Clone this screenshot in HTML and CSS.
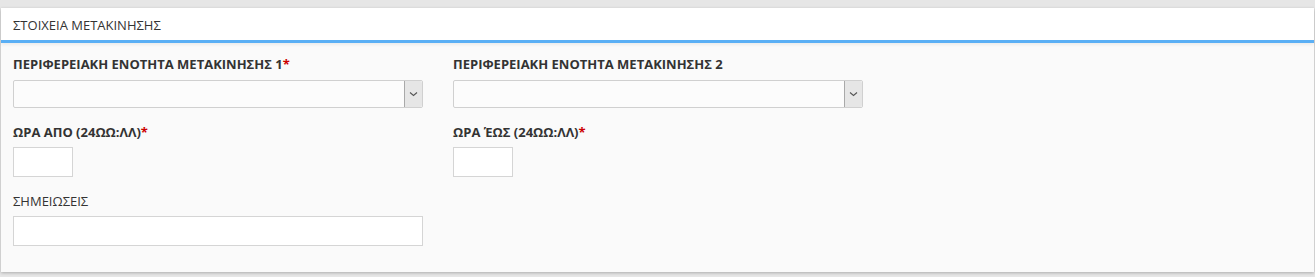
FILE: index.html
```html
<!DOCTYPE html>
<html lang="el">
<head>
    <meta charset="UTF-8">
    <title>Στοιχεία Μετακίνησης</title>
    <link rel="stylesheet" href="styles.css">
</head>
<body>

<div class="panel">
    <div class="panel-heading">ΣΤΟΙΧΕΙΑ ΜΕΤΑΚΙΝΗΣΗΣ</div>
    <div class="panel-body">
        <div class="row">
            <div class="field wide">
                <label class="strong">ΠΕΡΙΦΕΡΕΙΑΚΗ ΕΝΟΤΗΤΑ ΜΕΤΑΚΙΝΗΣΗΣ 1<span class="req">*</span></label>
                <div class="select">
                    <span class="select-btn">
                        <svg width="9" height="6" viewBox="0 0 9 6"><path d="M1 1.5 L4.5 4.5 L8 1.5" fill="none" stroke="#555" stroke-width="1.1"/></svg>
                    </span>
                </div>
            </div>
            <div class="field wide">
                <label class="strong">ΠΕΡΙΦΕΡΕΙΑΚΗ ΕΝΟΤΗΤΑ ΜΕΤΑΚΙΝΗΣΗΣ 2</label>
                <div class="select">
                    <span class="select-btn">
                        <svg width="9" height="6" viewBox="0 0 9 6"><path d="M1 1.5 L4.5 4.5 L8 1.5" fill="none" stroke="#555" stroke-width="1.1"/></svg>
                    </span>
                </div>
            </div>
        </div>
        <div class="row">
            <div class="field wide">
                <label class="strong">ΩΡΑ ΑΠΟ (24ΩΩ:ΛΛ)<span class="req">*</span></label>
                <input type="text" class="input time">
            </div>
            <div class="field wide">
                <label class="strong">ΩΡΑ ΈΩΣ (24ΩΩ:ΛΛ)<span class="req">*</span></label>
                <input type="text" class="input time">
            </div>
        </div>
        <div class="row">
            <div class="field wide">
                <label>ΣΗΜΕΙΩΣΕΙΣ</label>
                <input type="text" class="input notes">
            </div>
        </div>
    </div>
</div>

</body>
</html>
```

FILE: styles.css
```css
body {
    margin: 0;
    padding: 8px 1px 5px 1px;
    background-color: #e6e6e6;
    font-family: "Open Sans", Arial, sans-serif;
    font-size: 13px;
    color: #333;
}

.panel {
    background-color: #fafafa;
    box-shadow: 0 1px 3px rgba(0, 0, 0, 0.25);
}

.panel-heading {
    height: 31px;
    line-height: 32px;
    padding: 1px 12px 0 12px;
    background-color: #fff;
    border-bottom: 3px solid #5aaff5;
    box-shadow: 0 2px 3px rgba(0, 0, 0, 0.06);
}

.panel-body {
    padding: 12px 12px 26px 12px;
}

.row {
    display: flex;
    gap: 30px;
    margin-bottom: 15px;
}

.row:last-child {
    margin-bottom: 0;
}

.field {
    display: flex;
    flex-direction: column;
}

.field.wide {
    width: 410px;
}

label {
    display: block;
    height: 18px;
    line-height: 18px;
    margin-bottom: 6px;
    color: #333;
}

label.strong {
    font-weight: bold;
}

.req {
    color: #c00;
}

.select {
    position: relative;
    height: 26px;
    margin-top: 1px;
    border: 1px solid #d0d0d0;
    border-radius: 2px;
    background-color: #fcfcfc;
}

.select-btn {
    position: absolute;
    top: 0;
    right: 0;
    bottom: 0;
    width: 17px;
    display: flex;
    align-items: center;
    justify-content: center;
    background-color: #e6e6e6;
    border-left: 1px solid #a9a9a9;
    border-radius: 0 2px 2px 0;
}

.input {
    box-sizing: border-box;
    height: 30px;
    margin: 0;
    border: 1px solid #d5d5d5;
    background-color: #fff;
    font-family: inherit;
}

.input.time {
    width: 60px;
}

.input.notes {
    width: 410px;
}
```
